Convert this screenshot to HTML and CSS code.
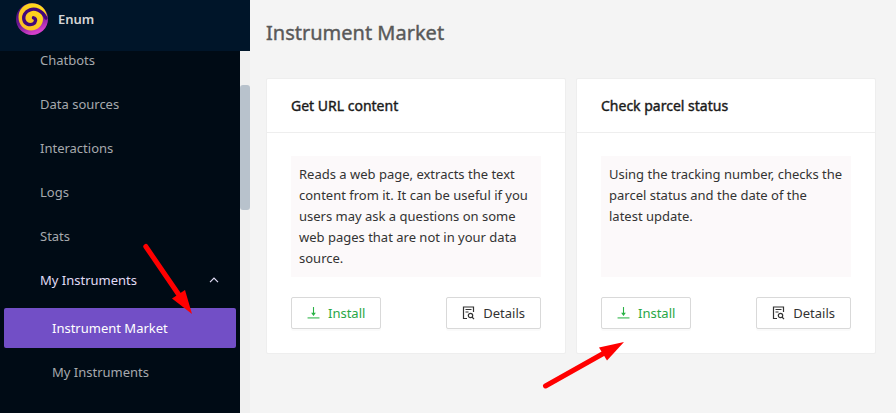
FILE: index.html
```html
<!DOCTYPE html>
<html lang="en">
<head>
<meta charset="utf-8">
<title>Instrument Market</title>
<link rel="stylesheet" href="styles.css">
</head>
<body>
<svg class="sprite" aria-hidden="true">
  <symbol id="download" viewBox="0 0 12 12">
    <path d="M6 0.500V8" stroke="#28b245" fill="none"/>
    <path d="M3.800 5.800H8.200L6 8.800Z" fill="#28b245"/>
    <path d="M0.500 10.500H11.500" stroke="#28b245" stroke-opacity=".6" stroke-width="1.600" fill="none"/>
  </symbol>
  <symbol id="details" viewBox="0 0 13 14">
    <path d="M5 12.500H1.500V1H11.500V6M3.500 3.500H9.500M3.500 6H6.500" stroke="#333" fill="none" stroke-width="1.200"/>
    <circle cx="8.500" cy="9.500" r="2.200" stroke="#333" fill="none" stroke-width="1.200"/>
    <path d="M10 11L12 13.200" stroke="#333" stroke-width="1.200"/>
  </symbol>
</svg>
<div class="app">
  <aside class="sidebar">
    <header class="brand">
      <svg class="logo" viewBox="0 0 32 32" aria-hidden="true">
        <defs>
          <linearGradient id="purple" x1="0" y1="0" x2=".4" y2="1"><stop offset="0" stop-color="#34086d"/><stop offset=".6" stop-color="#6b168f"/><stop offset="1" stop-color="#d43fc9"/></linearGradient>
          <linearGradient id="yellow" x1="0" y1="1" x2="1" y2="0"><stop offset="0" stop-color="#f9b928"/><stop offset="1" stop-color="#ffe318"/></linearGradient>
        </defs>
        <circle cx="16" cy="16" r="16" fill="url(#purple)"/>
        <path d="M31.500 16C31 6 24 .3 16 .3C8 .3 2.500 7 2.500 14C2.500 22 8 27.500 15 27.500C22 27.500 27 22 27 16C27 14 26 12 25 10C28 11 30 13 31.500 16Z" fill="url(#yellow)"/>
        <path d="M30 15C26 7 19 5 14 6.800C9 8.500 7 13 8 17C9 21 13.500 22.500 17 21C20 19.500 20.500 15.500 17.500 14.800" fill="none" stroke="#42087b" stroke-width="3.400" stroke-linecap="round"/>
      </svg>
      <span>Enum</span>
    </header>
    <div class="scroller">
      <nav class="menu">
        <a href="#">Chatbots</a>
        <a href="#">Data sources</a>
        <a href="#">Interactions</a>
        <a href="#">Logs</a>
        <a href="#">Stats</a>
        <button class="group" type="button" aria-expanded="true">My Instruments
          <svg class="chevron" viewBox="0 0 10 6" aria-hidden="true"><path d="M1 5.200L5 1.200L9 5.200" fill="none" stroke="currentColor" stroke-width="1.200"/></svg>
        </button>
        <a class="sub selected" href="#" aria-current="page">Instrument Market</a>
        <a class="sub" href="#">My Instruments</a>
      </nav>
      <div class="track"><div class="thumb"></div></div>
    </div>
  </aside>
  <main class="content">
    <h1>Instrument Market</h1>
    <div class="cards">
      <article class="card">
        <h2>Get URL content</h2>
        <div class="body">
          <p>Reads a web page, extracts the text content from it. It can be useful if you users may ask a questions on some web pages that are not in your data source.</p>
          <div class="actions">
            <button class="install" type="button"><svg class="icon" aria-hidden="true"><use href="#download"/></svg>Install</button>
            <button type="button"><svg class="icon" aria-hidden="true"><use href="#details"/></svg>Details</button>
          </div>
        </div>
      </article>
      <article class="card">
        <h2>Check parcel status</h2>
        <div class="body">
          <p>Using the tracking number, checks the parcel status and the date of the latest update.</p>
          <div class="actions">
            <button class="install" type="button"><svg class="icon" aria-hidden="true"><use href="#download"/></svg>Install</button>
            <button type="button"><svg class="icon" aria-hidden="true"><use href="#details"/></svg>Details</button>
          </div>
        </div>
      </article>
    </div>
  </main>
</div>
<svg class="pointer to-menu" viewBox="0 0 50 72" aria-hidden="true"><path d="M2.800 3.500L36 52" stroke="#f00" stroke-width="5" stroke-linecap="round"/><path d="M49 71L29 55.500L42 47Z" fill="#f00"/></svg>
<svg class="pointer to-install" viewBox="0 0 84 50" aria-hidden="true"><path d="M3.500 46L64 12" stroke="#f00" stroke-width="5" stroke-linecap="round"/><path d="M82 2L57 7.500L65 20.500Z" fill="#f00"/></svg>
</body>
</html>
```

FILE: styles.css
```css
* { box-sizing: border-box; }
body {
  margin: 0;
  font: 13px/21px "Noto Sans", sans-serif;
  color: #333;
  background: #f4f4f4;
}
.sprite { display: none; }
.app { display: flex; height: 100vh; overflow: hidden; }

.sidebar {
  flex: none;
  width: 250px;
  display: flex;
  flex-direction: column;
  background: #000b15;
}
.brand {
  flex: none;
  display: flex;
  align-items: center;
  gap: 10px;
  height: 51px;
  padding: 0 16px 13px;
  background: #001529;
  color: #d5d5d5;
  font-weight: 600;
}
.logo { width: 32px; height: 32px; }
.scroller { flex: 1; min-height: 0; display: flex; overflow: hidden; }
.menu {
  flex: 1;
  display: flex;
  flex-direction: column;
  gap: 4px;
  height: max-content;
  padding: 0 4px;
  margin-top: -11px;
}
.menu a, .group {
  display: flex;
  align-items: center;
  height: 40px;
  padding: 0 17px 0 36px;
  border: 0;
  border-radius: 2px;
  background: none;
  color: #a6a9ad;
  font: inherit;
  text-decoration: none;
}
.menu .group { justify-content: space-between; color: #e0dcf5; }
.menu .sub { padding-left: 48px; }
.menu .selected { margin: 4px 0 0; background: #724fc6; color: #fff; }
.chevron { width: 10px; height: 6px; }
.track { width: 10px; padding-top: 34px; background: #f0f0f0; }
.thumb { height: 125px; border-radius: 3px; background: #b8c2cc; }

.content { flex: 1; padding: 17px 20px 16px 16px; }
h1, h2 { font-weight: 400; -webkit-text-stroke: 0.400px currentColor; }
h1 { margin: 0 0 29px; font-size: 20px; line-height: 32px; color: #595959; }
.cards { display: grid; grid-template-columns: repeat(auto-fill, minmax(280px, 1fr)); gap: 10px; }
.card {
  display: flex;
  flex-direction: column;
  border: 1px solid #eee;
  border-radius: 2px;
  background: #fff;
}
h2 {
  margin: 0;
  padding: 16px 24px 15px;
  border-bottom: 1px solid #eee;
  font-size: 14px;
  line-height: 22px;
  color: #1a1a1a;
}
.body { flex: 1; display: flex; flex-direction: column; gap: 20px; padding: 23px 24px 24px; }
.body p { flex: 1; margin: 0; padding: 8px; background: #fcf9fa; }
.actions { display: flex; justify-content: space-between; }
.actions button {
  display: flex;
  align-items: center;
  gap: 8px;
  height: 32px;
  padding: 0 15px;
  border: 1px solid #d9d9d9;
  border-radius: 2px;
  background: #fff;
  box-shadow: 0 2px 0 rgba(0, 0, 0, .02);
  color: #333;
  font: inherit;
}
.actions .install { color: #28a745; }
.icon { width: 13px; height: 14px; }

.pointer { position: absolute; fill: none; pointer-events: none; }
.to-menu { left: 143px; top: 243px; width: 50px; height: 72px; }
.to-install { left: 542px; top: 340px; width: 84px; height: 50px; }
```
